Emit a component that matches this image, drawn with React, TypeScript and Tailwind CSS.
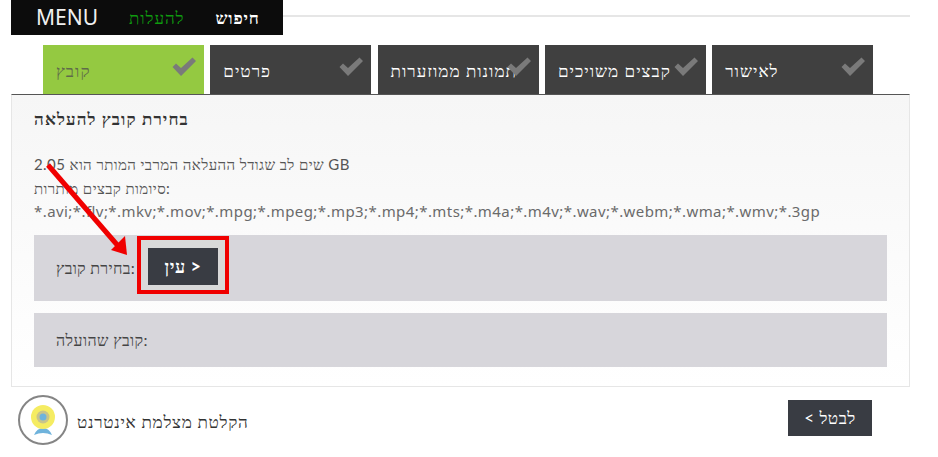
const font = "font-['Lato','Liberation_Serif',serif]";

const steps = [
  { label: 'קובץ', active: true },
  { label: 'פרטים' },
  { label: 'תמונות ממוזערות' },
  { label: 'קבצים משויכים' },
  { label: 'לאישור' },
];

const CheckMark = () => (
  <svg className="absolute right-[8px] top-[12px] w-[24px] h-[20px]" viewBox="0 0 24 20">
    <path d="M0.5 10 L4 6.5 L9 11 L20.5 0.5 L24 4 L9 19 Z" fill="#7a7a7a" />
  </svg>
);

const CamIcon = () => (
  <div className="w-[50px] h-[50px] rounded-full border-2 border-[#858585] flex items-center justify-center">
    <svg width="26" height="30" viewBox="0 0 26 30">
      <path d="M4 30 Q7 23 13 23 Q19 23 22 30 Q13 26 4 30 Z" fill="#6fb3dc" />
      <circle cx="13" cy="12" r="12" fill="#f5ec62" />
      <circle cx="13" cy="12" r="6.5" fill="#c9c48a" />
      <circle cx="13" cy="12" r="3.5" fill="#6fb3dc" />
    </svg>
  </div>
);

export default function App() {
  return (
    <div className={`relative w-[938px] h-[457px] bg-white overflow-hidden pl-[11px] pr-[28px] ${font}`}>
      <div className="flex items-center h-[35px]">
        <div className="w-[272px] h-[35px] bg-[#0c0c0c] flex items-center pl-[25px]">
          <span className="text-[21px] text-[#f0f0f0] font-['Noto_Sans',sans-serif] leading-none">MENU</span>
          <span className="ml-[31px] text-[17px] tracking-[0.9px] text-[#0f9a0f]">להעלות</span>
          <span className="ml-[31px] text-[17px] tracking-[0.8px] font-bold text-white">חיפוש</span>
        </div>
        <div className="flex-1 h-[2px] bg-[#e6e6e6] -mt-[3px]" />
      </div>

      <div className="flex gap-[6.3px] pl-[32px] mt-[10px] h-[49px]">
        {steps.map((s) => (
          <div
            key={s.label}
            className={`relative w-[161px] h-[49px] pl-[13px] pt-[15px] text-[17px] tracking-[1px] leading-[22px] whitespace-nowrap overflow-hidden ${
              s.active ? 'bg-[#94c941] text-[#5f6b4a]' : 'bg-[#404040] text-white'
            }`}
          >
            {s.label}
            <CheckMark />
          </div>
        ))}
      </div>

      <div className="h-[293px] border border-[#e6e6e6] border-t-[#555555] bg-gradient-to-b from-[#f6f6f6] to-white px-[22px] pt-[13px]">
        <div className="text-[17px] tracking-[1.1px] font-bold leading-[22px] text-[#333333]">בחירת קובץ להעלאה</div>
        <div className="mt-[23px] text-[15px] leading-[23.5px] text-[#555555]">
          <div className="tracking-[0.4px]">2.05 שים לב שגודל ההעלאה המרבי המותר הוא GB</div>
          <div className="tracking-[0.4px]">סיומות קבצים מותרות:</div>
          <div className="font-['Noto_Sans',sans-serif] tracking-[0.43px] text-[#6a6a6a]">*.avi;*.flv;*.mkv;*.mov;*.mpg;*.mpeg;*.mp3;*.mp4;*.mts;*.m4a;*.m4v;*.wav;*.webm;*.wma;*.wmv;*.3gp</div>
        </div>
        <div className="mt-[11px] h-[66px] bg-[#d7d6db] flex items-center pl-[22px]">
          <span className="text-[16px] tracking-[0.3px] text-[#444444] w-[81px] whitespace-nowrap">בחירת קובץ:</span>
          <div className="-mt-[5px] w-[92px] h-[58px] border-[4px] border-[#f00000] bg-[#d9d9d9] flex items-center justify-center pt-[3px]">
            <button className="w-[70px] h-[37px] bg-[#393c43] text-white text-[18px] tracking-[0.5px] font-bold">עין &gt;</button>
          </div>
        </div>
        <div className="mt-[12px] h-[54px] bg-[#d7d6db] flex items-center pl-[22px]">
          <span className="text-[16px] tracking-[0.4px] text-[#444444]">קובץ שהועלה:</span>
        </div>
      </div>

      <div className="flex items-center justify-between pl-[7px] pr-[38px] mt-[8px]">
        <div className="flex items-center gap-[9px]">
          <CamIcon />
          <span className="mt-[3px] text-[17px] tracking-[0.7px] text-[#333333]">הקלטת מצלמת אינטרנט</span>
        </div>
        <button className="w-[84px] h-[36px] -mt-[5px] bg-[#393c43] text-white text-[17px] tracking-[0.5px]">&lt; לבטל</button>
      </div>

      {/* annotation arrow over the hint text */}
      <svg className="absolute left-0 top-0 pointer-events-none" width="938" height="457">
        <path d="M48 165 L119 247" stroke="#f00000" strokeWidth="5" fill="none" />
        <path d="M127 255 L111 250 L125 236 Z" fill="#f00000" />
      </svg>
    </div>
  );
}
